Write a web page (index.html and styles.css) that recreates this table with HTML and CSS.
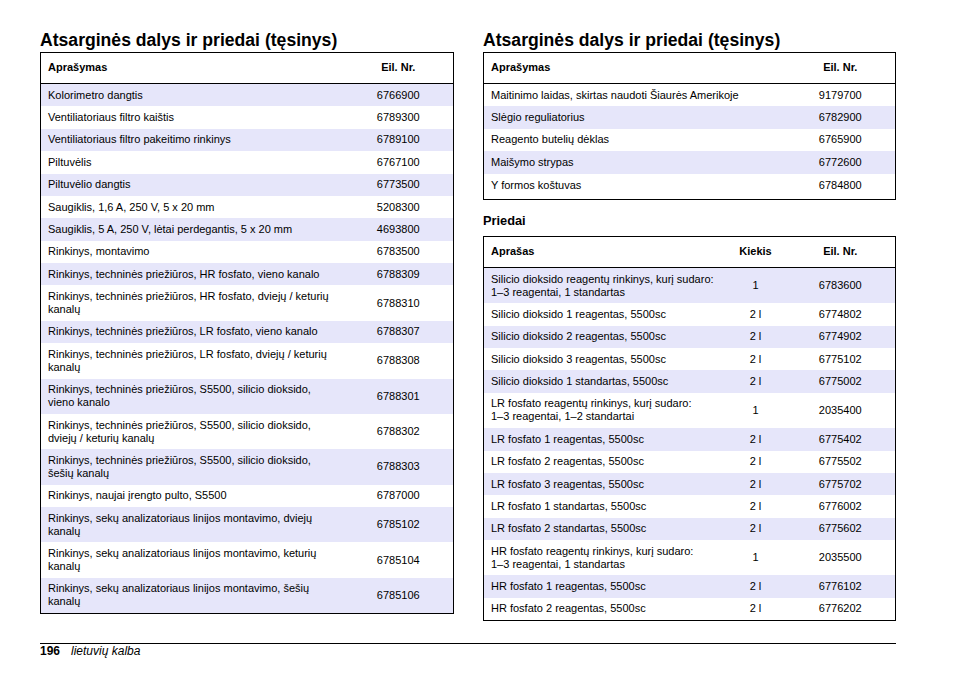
FILE: index.html
```html
<!DOCTYPE html>
<html lang="lt">
<head>
<meta charset="utf-8">
<title>Atsarginės dalys ir priedai</title>
<link rel="stylesheet" href="styles.css">
</head>
<body>
<div class="page">
  <div class="columns">
    <section class="column">
      <h2 class="title">Atsarginės dalys ir priedai (tęsinys)</h2>
      <table class="parts parts--odd">
        <colgroup><col><col class="col-num"></colgroup>
        <thead>
          <tr><th class="desc">Aprašymas</th><th class="num">Eil. Nr.</th></tr>
        </thead>
        <tbody>
          <tr><td class="desc">Kolorimetro dangtis</td><td class="num">6766900</td></tr>
          <tr><td class="desc">Ventiliatoriaus filtro kaištis</td><td class="num">6789300</td></tr>
          <tr><td class="desc">Ventiliatoriaus filtro pakeitimo rinkinys</td><td class="num">6789100</td></tr>
          <tr><td class="desc">Piltuvėlis</td><td class="num">6767100</td></tr>
          <tr><td class="desc">Piltuvėlio dangtis</td><td class="num">6773500</td></tr>
          <tr><td class="desc">Saugiklis, 1,6 A, 250 V, 5 x 20 mm</td><td class="num">5208300</td></tr>
          <tr><td class="desc">Saugiklis, 5 A, 250 V, lėtai perdegantis, 5 x 20 mm</td><td class="num">4693800</td></tr>
          <tr><td class="desc">Rinkinys, montavimo</td><td class="num">6783500</td></tr>
          <tr><td class="desc">Rinkinys, techninės priežiūros, HR fosfato, vieno kanalo</td><td class="num">6788309</td></tr>
          <tr><td class="desc">Rinkinys, techninės priežiūros, HR fosfato, dviejų / keturių kanalų</td><td class="num">6788310</td></tr>
          <tr><td class="desc">Rinkinys, techninės priežiūros, LR fosfato, vieno kanalo</td><td class="num">6788307</td></tr>
          <tr><td class="desc">Rinkinys, techninės priežiūros, LR fosfato, dviejų / keturių kanalų</td><td class="num">6788308</td></tr>
          <tr><td class="desc">Rinkinys, techninės priežiūros, S5500, silicio dioksido, vieno kanalo</td><td class="num">6788301</td></tr>
          <tr><td class="desc">Rinkinys, techninės priežiūros, S5500, silicio dioksido, dviejų / keturių kanalų</td><td class="num">6788302</td></tr>
          <tr><td class="desc">Rinkinys, techninės priežiūros, S5500, silicio dioksido, šešių kanalų</td><td class="num">6788303</td></tr>
          <tr><td class="desc">Rinkinys, naujai įrengto pulto, S5500</td><td class="num">6787000</td></tr>
          <tr><td class="desc">Rinkinys, sekų analizatoriaus linijos montavimo, dviejų kanalų</td><td class="num">6785102</td></tr>
          <tr><td class="desc">Rinkinys, sekų analizatoriaus linijos montavimo, keturių kanalų</td><td class="num">6785104</td></tr>
          <tr><td class="desc">Rinkinys, sekų analizatoriaus linijos montavimo, šešių kanalų</td><td class="num">6785106</td></tr>
        </tbody>
      </table>
    </section>

    <section class="column">
      <h2 class="title">Atsarginės dalys ir priedai (tęsinys)</h2>
      <table class="parts parts--even parts--tail">
        <colgroup><col><col class="col-num"></colgroup>
        <thead>
          <tr><th class="desc">Aprašymas</th><th class="num">Eil. Nr.</th></tr>
        </thead>
        <tbody>
          <tr><td class="desc">Maitinimo laidas, skirtas naudoti Šiaurės Amerikoje</td><td class="num">9179700</td></tr>
          <tr><td class="desc">Slėgio reguliatorius</td><td class="num">6782900</td></tr>
          <tr><td class="desc">Reagento butelių dėklas</td><td class="num">6765900</td></tr>
          <tr><td class="desc">Maišymo strypas</td><td class="num">6772600</td></tr>
          <tr><td class="desc">Y formos koštuvas</td><td class="num">6784800</td></tr>
        </tbody>
      </table>

      <h3 class="subtitle">Priedai</h3>
      <table class="parts parts--odd">
        <colgroup><col><col class="col-qty"><col class="col-num"></colgroup>
        <thead>
          <tr><th class="desc">Aprašas</th><th class="num">Kiekis</th><th class="num">Eil. Nr.</th></tr>
        </thead>
        <tbody>
          <tr><td class="desc">Silicio dioksido reagentų rinkinys, kurį sudaro:<br>1–3 reagentai, 1 standartas</td><td class="num">1</td><td class="num">6783600</td></tr>
          <tr><td class="desc">Silicio dioksido 1 reagentas, 5500sc</td><td class="num">2 l</td><td class="num">6774802</td></tr>
          <tr><td class="desc">Silicio dioksido 2 reagentas, 5500sc</td><td class="num">2 l</td><td class="num">6774902</td></tr>
          <tr><td class="desc">Silicio dioksido 3 reagentas, 5500sc</td><td class="num">2 l</td><td class="num">6775102</td></tr>
          <tr><td class="desc">Silicio dioksido 1 standartas, 5500sc</td><td class="num">2 l</td><td class="num">6775002</td></tr>
          <tr><td class="desc">LR fosfato reagentų rinkinys, kurį sudaro:<br>1–3 reagentai, 1–2 standartai</td><td class="num">1</td><td class="num">2035400</td></tr>
          <tr><td class="desc">LR fosfato 1 reagentas, 5500sc</td><td class="num">2 l</td><td class="num">6775402</td></tr>
          <tr><td class="desc">LR fosfato 2 reagentas, 5500sc</td><td class="num">2 l</td><td class="num">6775502</td></tr>
          <tr><td class="desc">LR fosfato 3 reagentas, 5500sc</td><td class="num">2 l</td><td class="num">6775702</td></tr>
          <tr><td class="desc">LR fosfato 1 standartas, 5500sc</td><td class="num">2 l</td><td class="num">6776002</td></tr>
          <tr><td class="desc">LR fosfato 2 standartas, 5500sc</td><td class="num">2 l</td><td class="num">6775602</td></tr>
          <tr><td class="desc">HR fosfato reagentų rinkinys, kurį sudaro:<br>1–3 reagentai, 1 standartas</td><td class="num">1</td><td class="num">2035500</td></tr>
          <tr><td class="desc">HR fosfato 1 reagentas, 5500sc</td><td class="num">2 l</td><td class="num">6776102</td></tr>
          <tr><td class="desc">HR fosfato 2 reagentas, 5500sc</td><td class="num">2 l</td><td class="num">6776202</td></tr>
        </tbody>
      </table>
    </section>
  </div>

  <footer class="footer">
    <span class="page-num">196</span>
    <span class="lang">lietuvių kalba</span>
  </footer>
</div>
</body>
</html>
```

FILE: styles.css
```css
html, body {
  margin: 0;
  padding: 0;
  background: #fff;
}

body {
  font-family: "Liberation Sans", Arial, sans-serif;
  color: #000;
}

.page {
  width: 856px;
  padding: 30px 0 0 40px;
}

.columns {
  display: flex;
  gap: 29px;
  align-items: flex-start;
}

.column {
  width: 414px;
}

.column + .column {
  width: 413px;
}

.title {
  margin: 0 0 2px;
  font-size: 17.6px;
  line-height: 20px;
  font-weight: bold;
}

.subtitle {
  margin: 13px 0 8px;
  font-size: 12.8px;
  line-height: 15px;
  font-weight: bold;
}

.parts {
  width: 100%;
  border-collapse: collapse;
  border: 1px solid #000;
  table-layout: fixed;
  font-size: 11px;
  line-height: 13px;
}

.col-num {
  width: 110px;
}

.col-qty {
  width: 60px;
}

.parts th {
  padding: 8px 4px 9px 7px;
  font-weight: bold;
  border-bottom: 1px solid #000;
}

.parts td {
  padding: 4.7px 4px 4.7px 7px;
  vertical-align: middle;
}

.parts--tail tbody tr:last-child td {
  padding-top: 5.7px;
  padding-bottom: 6.7px;
}

.parts .desc {
  text-align: left;
}

.parts .num {
  text-align: center;
  padding-left: 2px;
  padding-right: 2px;
}

.parts--odd tbody tr:nth-child(odd),
.parts--even tbody tr:nth-child(even) {
  background: #e6e6fa;
}

.footer {
  margin-top: 22px;
  border-top: 1px solid #000;
  padding-top: 0;
  font-size: 12px;
  line-height: 14px;
  display: flex;
  gap: 11px;
}

.page-num {
  font-weight: bold;
}

.lang {
  font-style: italic;
}
```
